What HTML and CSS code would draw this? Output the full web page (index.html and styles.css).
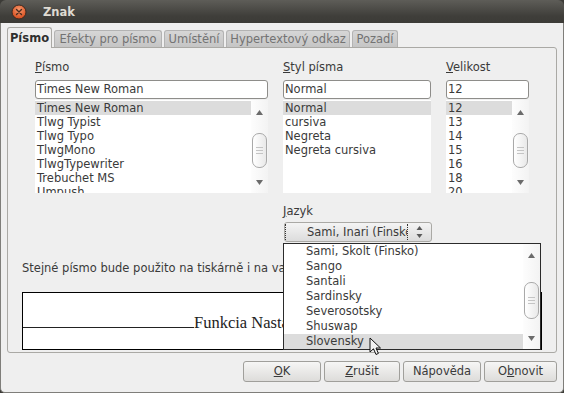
FILE: index.html
```html
<!DOCTYPE html>
<html>
<head>
<meta charset="utf-8">
<link rel="stylesheet" href="styles.css">
</head>
<body>
<div class="window">
  <div class="titlebar">
    <svg class="close" width="16" height="16" viewBox="0 0 16 16">
      <defs>
        <radialGradient id="cg" cx="50%" cy="35%" r="65%">
          <stop offset="0" stop-color="#f79a6e"/>
          <stop offset="1" stop-color="#d5491a"/>
        </radialGradient>
      </defs>
      <circle cx="8" cy="8" r="7" fill="url(#cg)" stroke="#3a2a22" stroke-width="1"/>
      <path d="M5.5 5.5 L10.5 10.5 M10.5 5.5 L5.5 10.5" stroke="#4a2c20" stroke-width="1.4" stroke-linecap="round"/>
    </svg>
    <span class="title">Znak</span>
  </div>
  <div class="body">
    <div class="tabs">
      <div class="tab active t1">Písmo</div>
      <div class="tab t2">Efekty pro písmo</div>
      <div class="tab t3">Umístění</div>
      <div class="tab t4">Hypertextový odkaz</div>
      <div class="tab t5">Pozadí</div>
    </div>
    <div class="panel">
      <div class="cols">
        <div class="col">
          <div class="label"><u>P</u>ísmo</div>
          <div class="input">Times New Roman</div>
          <div class="list">
            <div class="items">
              <div class="row sel">Times New Roman</div>
              <div class="row">Tlwg Typist</div>
              <div class="row">Tlwg Typo</div>
              <div class="row">TlwgMono</div>
              <div class="row">TlwgTypewriter</div>
              <div class="row">Trebuchet MS</div>
              <div class="row">Umpush</div>
            </div>
            <div class="sb sb-list">
              <svg class="arr" width="7" height="5" viewBox="0 0 7 5"><path d="M3.5 0 L7 5 L0 5 Z" fill="#6b6b6b"/></svg>
              <div class="thumb"><span></span><span></span><span></span></div>
              <div class="spacer"></div>
              <svg class="arr" width="7" height="5" viewBox="0 0 7 5"><path d="M0 0 L7 0 L3.5 5 Z" fill="#6b6b6b"/></svg>
            </div>
          </div>
        </div>
        <div class="col">
          <div class="label"><u>S</u>tyl písma</div>
          <div class="input">Normal</div>
          <div class="list">
            <div class="items">
              <div class="row sel">Normal</div>
              <div class="row">cursiva</div>
              <div class="row">Negreta</div>
              <div class="row">Negreta cursiva</div>
            </div>
          </div>
        </div>
        <div class="col">
          <div class="label"><u>V</u>elikost</div>
          <div class="input">12</div>
          <div class="list">
            <div class="items">
              <div class="row sel">12</div>
              <div class="row">13</div>
              <div class="row">14</div>
              <div class="row">15</div>
              <div class="row">16</div>
              <div class="row">18</div>
              <div class="row">20</div>
            </div>
            <div class="sb sb-list">
              <svg class="arr" width="7" height="5" viewBox="0 0 7 5"><path d="M3.5 0 L7 5 L0 5 Z" fill="#6b6b6b"/></svg>
              <div class="thumb"><span></span><span></span><span></span></div>
              <div class="spacer"></div>
              <svg class="arr" width="7" height="5" viewBox="0 0 7 5"><path d="M0 0 L7 0 L3.5 5 Z" fill="#6b6b6b"/></svg>
            </div>
          </div>
        </div>
        <div class="lang">
          <div class="label lang-label"><u>J</u>azyk</div>
          <div class="combo">
            <div class="combo-text">Sami, Inari (Finsko)</div>
            <div class="spin">
              <svg width="7" height="12" viewBox="0 0 7 12"><path d="M3.5 0 L6.5 4 L0.5 4 Z M0.5 8 L6.5 8 L3.5 12 Z" fill="#5a5a5a"/></svg>
            </div>
          </div>
        </div>
      </div>
      <p class="note">Stejné písmo bude použito na tiskárně i na vaší obrazovce.</p>
      <div class="preview">
        <div class="pv-row"><span class="pv-line"></span><span class="pv-text">Funkcia Nastavenia</span><span class="pv-line"></span></div>
      </div>
      <div class="popup">
        <div class="items">
          <div class="prow">Sami, Skolt (Finsko)</div>
          <div class="prow">Sango</div>
          <div class="prow">Santali</div>
          <div class="prow">Sardinsky</div>
          <div class="prow">Severosotsky</div>
          <div class="prow">Shuswap</div>
          <div class="prow sel">Slovensky</div>
        </div>
        <div class="sb sb-pop">
          <svg class="arr" width="7" height="5" viewBox="0 0 7 5"><path d="M3.5 0 L7 5 L0 5 Z" fill="#6b6b6b"/></svg>
          <div class="thumb"><span></span><span></span><span></span></div>
          <div class="spacer"></div>
          <svg class="arr" width="7" height="5" viewBox="0 0 7 5"><path d="M0 0 L7 0 L3.5 5 Z" fill="#6b6b6b"/></svg>
        </div>
      </div>
      <svg class="cursor" width="13" height="19" viewBox="0 0 13 19">
        <path d="M1 1 L1 15 L4.5 11.8 L7 17.5 L9.4 16.4 L7 11 L11.5 11 Z" fill="#f4f4f4" stroke="#111" stroke-width="1" stroke-linejoin="round"/>
      </svg>
    </div>
    <div class="buttons">
      <div class="btn b-ok"><u>O</u>K</div>
      <div class="btn b-cancel"><u>Z</u>rušit</div>
      <div class="btn b-help">Nápověda</div>
      <div class="btn b-reset">O<u>b</u>novit</div>
    </div>
  </div>
</div>
</body>
</html>
```
FILE: styles.css
```css
* { box-sizing: border-box; }
html, body { margin: 0; padding: 0; }
body {
  width: 564px;
  height: 393px;
  overflow: hidden;
  background: #3c3b37;
  font-family: "DejaVu Sans", "Noto Sans", sans-serif;
  font-size: 11.5px;
  color: #3a3a3a;
}
u { text-decoration: underline; text-underline-offset: 1px; }
.window {
  width: 564px;
  height: 393px;
  display: flex;
  flex-direction: column;
}
.titlebar {
  height: 23px;
  flex: none;
  background: linear-gradient(#5e5d58, #3f3e3a 70%, #3c3b37);
  border-radius: 6px 6px 0 0;
  display: flex;
  align-items: center;
  padding-left: 11px;
}
.close { display: block; }
.title {
  color: #dfdbd2;
  font-weight: bold;
  margin-left: 16px;
}
.body {
  flex: 1;
  background: #efefef;
  border: 1px solid #7f7e7a;
  border-top: 0;
  border-radius: 0 0 5px 5px;
  padding: 4px 6px 0 6px;
  display: flex;
  flex-direction: column;
}
.tabs {
  height: 21px;
  flex: none;
  display: flex;
  align-items: flex-end;
  gap: 2px;
}
.tab {
  height: 18px;
  line-height: 17px;
  text-align: center;
  color: #737373;
  background: linear-gradient(#d6d6d6, #c4c4c4);
  border: 1px solid #b3b3b3;
  border-bottom: 0;
  border-radius: 3px 3px 0 0;
  white-space: nowrap;
  overflow: hidden;
}
.t1 { width: 45px; }
.t2 { width: 108px; }
.t3 { width: 60px; }
.t4 { width: 124px; }
.t5 { width: 46px; }
.tab.active {
  height: 21px;
  line-height: 21px;
  color: #2f2f2f;
  font-weight: bold;
  background: #efefef;
  border-color: #aaa9a5;
  position: relative;
  z-index: 1;
}
.panel {
  flex: none;
  height: 306px;
  margin-top: -1px;
  border: 1px solid #aaa9a5;
  border-radius: 0 3px 3px 3px;
  padding: 12px 14px 0 14px;
  position: relative;
}
.cols {
  margin-left: 13px;
  display: grid;
  grid-template-columns: 233px 148px 83px;
  column-gap: 15px;
}
.label {
  height: 14px;
  line-height: 14px;
  margin-bottom: 6px;
  color: #3a3a3a;
}
.input {
  height: 19px;
  line-height: 17px;
  padding: 0 1px;
  background: #fff;
  border: 1px solid #8e8d8a;
  border-radius: 3px;
  white-space: nowrap;
  overflow: hidden;
}
.list {
  margin-top: 1px;
  height: 93px;
  background: #fff;
  display: flex;
  overflow: hidden;
}
.items { flex: 1; min-width: 0; }
.list .items { padding-top: 1px; }
.row {
  height: 14px;
  line-height: 14px;
  padding-left: 2px;
  white-space: nowrap;
}
.row.sel, .prow.sel { background: #dcdcdc; }
.sb {
  width: 17px;
  flex: none;
  display: flex;
  flex-direction: column;
  align-items: center;
  background: linear-gradient(90deg, #fdfdfd, #f3f3f3);
}
.arr { display: block; flex: none; }
.spacer { flex: 1; }
.thumb {
  width: 15px;
  flex: none;
  border: 1px solid #a9a9a9;
  border-radius: 7px;
  background: linear-gradient(90deg, #ffffff, #e9e9e9);
  display: flex;
  flex-direction: column;
  align-items: center;
  justify-content: center;
  gap: 2px;
}
.thumb span {
  display: block;
  width: 7px;
  height: 1px;
  background: #c4c4c4;
}
.sb-list { padding: 10px 0 8px; }
.sb-list .thumb { margin-top: 18px; height: 35px; }
.sb-pop { padding: 9px 0 8px; }
.sb-pop .thumb { margin-top: 24px; height: 37px; }
.lang {
  grid-column: 2 / span 2;
  margin-top: 11px;
}
.lang-label { margin-bottom: 4px; }
.combo {
  width: 148px;
  height: 20px;
  margin-left: 1px;
  border: 1px solid #aaa9a5;
  border-radius: 3px;
  background: linear-gradient(#f4f4f4, #dcdcdc);
  display: flex;
  padding: 1px 0 1px 0;
}
.combo-text {
  width: 123px;
  flex: none;
  padding-left: 21px;
  line-height: 16px;
  border-left: 1px dotted #333;
  border-right: 1px dotted #333;
  white-space: nowrap;
  overflow: hidden;
}
.spin {
  flex: 1;
  display: flex;
  align-items: center;
  justify-content: center;
}
.spin svg { display: block; }
.note {
  margin: 19px 0 0 0;
  height: 14px;
  line-height: 14px;
  white-space: nowrap;
}
.preview {
  margin-top: 17px;
  height: 58px;
  border: 1px solid #000;
  background: #fff;
  padding-top: 20px;
  overflow: hidden;
}
.pv-row {
  font-family: "Liberation Serif", "Times New Roman", serif;
  font-size: 16.5px;
  line-height: 19px;
  white-space: nowrap;
  color: #222;
}
.pv-line {
  display: inline-block;
  width: 171px;
  height: 1px;
  background: #222;
  vertical-align: baseline;
}
.popup {
  position: absolute;
  left: 275px;
  top: 195px;
  width: 258px;
  height: 107px;
  border: 1px solid #2b2b2b;
  background: #fff;
  display: flex;
  overflow: hidden;
  z-index: 5;
}
.prow {
  height: 15px;
  line-height: 15px;
  padding-left: 22px;
  white-space: nowrap;
}
.cursor {
  position: absolute;
  left: 361px;
  top: 289px;
  z-index: 10;
}
.buttons {
  margin-top: 8px;
  display: flex;
  justify-content: flex-end;
  gap: 3px;
}
.btn {
  height: 21px;
  line-height: 19px;
  text-align: center;
  border: 1px solid #a09f9b;
  border-radius: 3px;
  background: linear-gradient(#f6f6f5, #dddcda);
  color: #3a3a3a;
}
.b-ok { width: 78px; }
.b-cancel { width: 76px; }
.b-help { width: 78px; }
.b-reset { width: 73px; }
```
